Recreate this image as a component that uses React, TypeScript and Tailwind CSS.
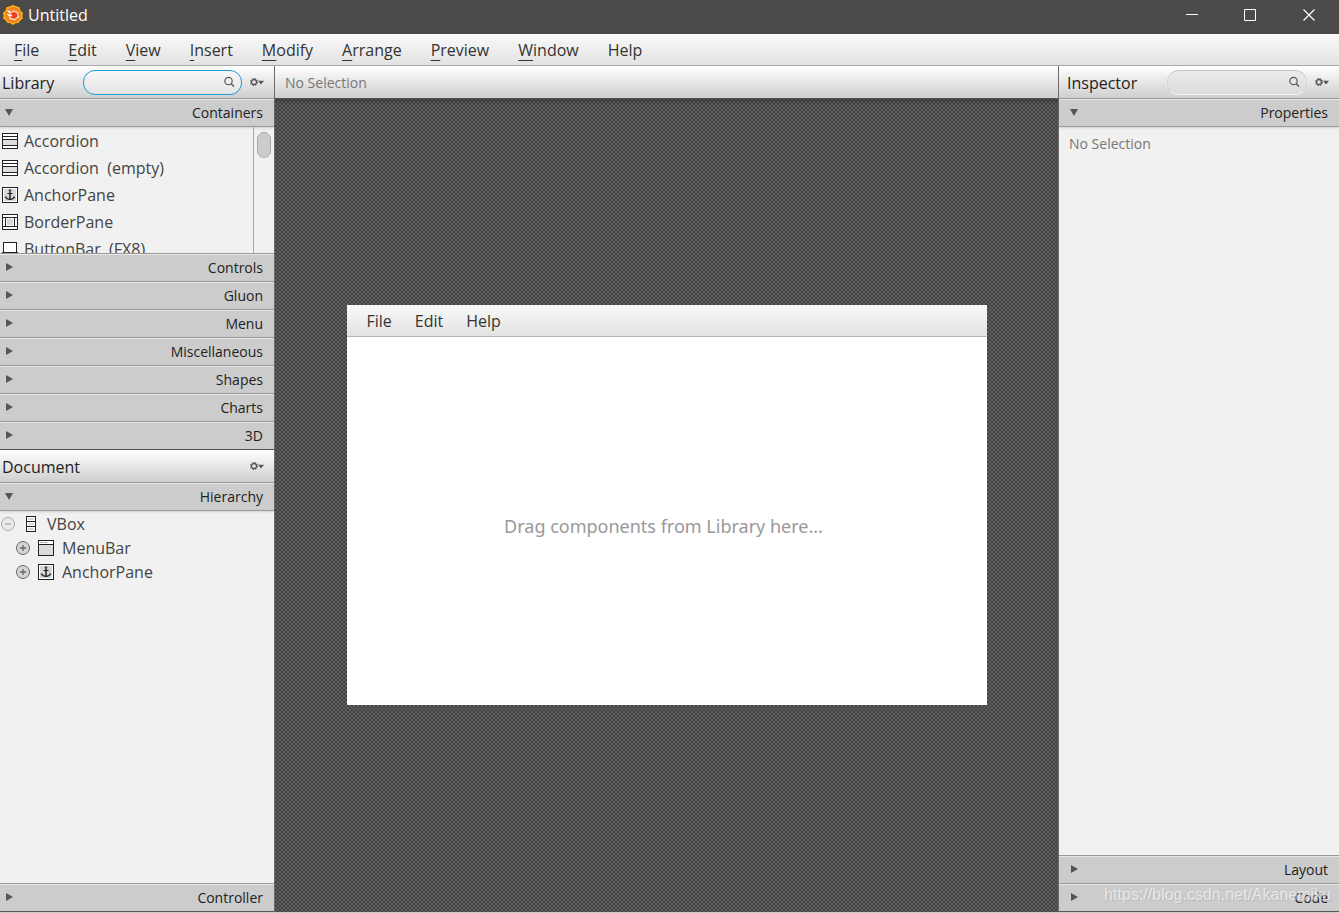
import React, { useState } from 'react';

const menus = ['File', 'Edit', 'View', 'Insert', 'Modify', 'Arrange', 'Preview', 'Window'];

const components = [
  { name: 'Accordion', icon: 'accordion' },
  { name: 'Accordion  (empty)', icon: 'accordion' },
  { name: 'AnchorPane', icon: 'anchor' },
  { name: 'BorderPane', icon: 'border' },
  { name: 'ButtonBar  (FX8)', icon: 'buttonbar' }
];

const librarySections = ['Controls', 'Gluon', 'Menu', 'Miscellaneous', 'Shapes', 'Charts', '3D'];

const Logo = () => (
  <svg width="20" height="20" viewBox="0 0 20 20" aria-hidden="true">
    <path d="M10 0l3.200 1.300 3.300.9 1 3.200L20 8l-.6 2.500.4 3-2.500 1.900L15.500 18l-3 .3L10 20l-2.500-1.700-3-.3-1.800-2.600L.2 13.500l.4-3L0 8l2.500-2.600 1-3.200 3.300-.9z" fill="#f9b21a" />
    <circle cx="10" cy="10" r="8" fill="#f58220" />
    <path d="M7 8l5-1 3 3-3.500 4-4-2z" fill="#ee4023" />
    <path d="M4.500 5.500l4 2L11 5.800l1.500 1.200 2.500.5-.2 2.500 1 2-2.300 1-1.500 1.800-2.500-.8-2.500-.2-.2-2.600-2.300-1.700 4.500 1.500z" fill="none" stroke="#fff" strokeWidth="1" strokeLinejoin="round" />
  </svg>
);

const SearchIcon = () => (
  <svg width="12" height="12" viewBox="0 0 12 12" fill="none" stroke="#5a5a5a" strokeWidth="1.200" aria-hidden="true">
    <circle cx="5.500" cy="5" r="3.700" />
    <path d="M8.200 7.700L11 10.500" strokeWidth="1.500" />
  </svg>
);

const GearIcon = () => (
  <svg width="14" height="8" viewBox="0 0 14 8" aria-hidden="true">
    <circle cx="4" cy="4" r="3.400" fill="none" stroke="#555" strokeWidth="1.200" strokeDasharray="1.335 1.335" />
    <circle cx="4" cy="4" r="2.500" fill="none" stroke="#555" strokeWidth="1.300" />
    <path d="M8 2.800H14L11 6.500z" fill="#555" />
  </svg>
);

const NodeIcon = ({ type }: { type: string }) => (
  <svg width="16" height="16" viewBox="0 0 16 16" className="shrink-0" shapeRendering="crispEdges" aria-hidden="true">
    {type === 'accordion' && (
      <>
        <rect x=".5" y=".5" width="15" height="15" fill="#fff" stroke="#222" />
        <rect x="1" y="7" width="14" height="5" fill="#dcdcdc" />
        <path d="M1 3.500h14M1 6.500h14M1 12.500h14" stroke="#222" />
      </>
    )}
    {type === 'anchor' && (
      <>
        <rect x=".5" y=".5" width="15" height="15" fill="#fff" stroke="#222" />
        <rect x="2" y="2" width="12" height="12" fill="#d8d8d8" />
        <g shapeRendering="auto" fill="none" stroke="#222">
          <circle cx="8" cy="3.500" r=".9" />
          <path d="M8 4.500v8" strokeWidth="1.500" />
          <path d="M5.500 6.500h5" />
          <path d="M3.700 10c.6 1.700 2.300 2.400 4.300 2.400s3.700-.7 4.300-2.400" strokeWidth="1.100" />
          <path d="M3 11l.6-1.500 1.400 1M13 11l-.6-1.500-1.400 1" strokeWidth=".6" />
        </g>
      </>
    )}
    {type === 'border' && (
      <>
        <rect x=".5" y=".5" width="15" height="15" fill="#fff" stroke="#222" />
        <path d="M1 3.500h14M1 12.500h14M3.500 4v8M12.500 4v8" stroke="#222" />
        <rect x="5" y="5" width="6" height="6" fill="#d8d8d8" />
      </>
    )}
    {type === 'buttonbar' && (
      <>
        <rect x="1.500" y="1.500" width="13" height="10" fill="#fff" stroke="#222" />
        <path d="M0 11.500h16" stroke="#222" />
      </>
    )}
    {type === 'vbox' && (
      <>
        <rect x="3.500" y=".5" width="9" height="15" fill="#fff" stroke="#222" />
        <path d="M4 5.500h8M4 10.500h8" stroke="#222" />
        <path d="M5 3h6M5 8h6M5 13h6" stroke="#d8d8d8" strokeWidth="2" />
      </>
    )}
    {type === 'menubar' && (
      <>
        <rect x=".5" y=".5" width="15" height="15" fill="#dcdcdc" stroke="#222" />
        <rect x="1" y="1" width="14" height="3" fill="#fff" />
        <path d="M1 4.500h14" stroke="#222" />
        <path d="M2 2.500h3M6 2.500h3" stroke="#aaa" />
      </>
    )}
  </svg>
);

const Disclosure = ({ open }: { open: boolean }) => (
  <button
    aria-label={open ? 'Collapse' : 'Expand'}
    className={`flex w-4 h-4 shrink-0 items-center justify-center ${open ? 'opacity-50' : ''}`}
  >
    <svg width="14" height="14" viewBox="0 0 14 14" fill="none" stroke="#666" aria-hidden="true">
      <circle cx="7" cy="7" r="6.500" fill={open ? '#e4e4e4' : '#d5d5d5'} />
      <path d={open ? 'M4 7h6' : 'M4 7h6M7 4v6'} strokeWidth="1.300" />
    </svg>
  </button>
);

const SectionHeader = ({ title, open = false, last = false }: { title: string; open?: boolean; last?: boolean }) => (
  <button
    aria-expanded={open}
    className={`flex h-7 w-full shrink-0 items-center justify-between border-t border-b border-t-[#e8e8e8] bg-[#cccccc] pr-[11px] pl-[5px] text-sm text-[#222] ${
      last ? 'border-b-[#555]' : 'border-b-[#999]'
    } ${open ? 'shadow-sm' : ''}`}
  >
    <svg width="8" height="8" viewBox="0 0 8 8" className="mb-0.5" fill="#555" aria-hidden="true">
      <path d={open ? 'M0 1h8L4 8z' : 'M1 0l7 4-7 4z'} />
    </svg>
    <span>{title}</span>
  </button>
);

const SearchField = ({ label, focused = false }: { label: string; focused?: boolean }) => {
  const [value, setValue] = useState('');
  return (
    <label
      className={`flex h-[25px] min-w-0 items-center rounded-xl border pr-1.5 pl-2 ${
        focused
          ? 'w-[159px] border-[#1a9dd4] bg-linear-to-b from-[#f8f8f8] to-[#e4e4e4]'
          : 'w-[140px] border-t-[#c4c4c4] border-x-[#d4d4d4] border-b-[#f4f4f4] bg-linear-to-b from-[#ebebeb] to-[#dcdcdc]'
      }`}
    >
      <input
        aria-label={label}
        value={value}
        onChange={(e) => setValue(e.target.value)}
        className="min-w-0 flex-1 bg-transparent text-sm outline-none"
      />
      <SearchIcon />
    </label>
  );
};

const PanelHeader = ({ title, children }: { title: string; children?: React.ReactNode }) => (
  <div className="flex h-[33px] shrink-0 items-center border-b border-[#999] bg-linear-to-b from-white to-[#cfcfcf] pr-2.5">
    <h2 className="flex-1 pt-0.5 text-base text-[#222]">{title}</h2>
    {children}
    <button aria-label={`${title} options`} className="ml-2">
      <GearIcon />
    </button>
  </div>
);

const TreeRow = ({ name, icon, open = false }: { name: string; icon: string; open?: boolean }) => (
  <li className={`flex h-6 items-center ${open ? '' : 'pl-[15px]'}`}>
    <Disclosure open={open} />
    <span className="mr-2 ml-[7px]">
      <NodeIcon type={icon} />
    </span>
    {name}
  </li>
);

const App = () => {
  return (
    <div className="flex h-screen flex-col overflow-hidden bg-[#f1f1f1] font-['Open_Sans',sans-serif] text-base text-[#333]">
      {/* Title bar */}
      <header className="flex h-[34px] shrink-0 items-center bg-[#4c4a48] pr-[23px] pb-1 pl-[3px] text-white">
        <Logo />
        <h1 className="ml-[5px] flex-1">Untitled</h1>
        <div className="flex gap-[46px]">
          <button aria-label="Minimize">
            <svg width="13" height="13" viewBox="0 0 13 13" stroke="#fff"><path d="M1 5.500h12" /></svg>
          </button>
          <button aria-label="Maximize">
            <svg width="13" height="13" viewBox="0 0 13 13" fill="none" stroke="#fff"><path d="M.5.5h11v11H.5z" /></svg>
          </button>
          <button aria-label="Close">
            <svg width="13" height="13" viewBox="0 0 13 13" stroke="#fff" strokeWidth="1.200"><path d="M.5.5l11 11M11.500.5l-11 11" /></svg>
          </button>
        </div>
      </header>

      {/* Menu bar */}
      <nav className="flex h-8 shrink-0 items-center gap-[29px] border-b border-[#aaa] bg-linear-to-b from-[#fafafa] to-[#e2e2e2] px-3.5">
        {menus.map((menu) => (
          <button key={menu}>
            <span className="underline decoration-1 underline-offset-4">{menu[0]}</span>
            {menu.slice(1)}
          </button>
        ))}
        <button>Help</button>
      </nav>

      <div className="flex min-h-0 flex-1 border-b border-[#ccc]">
        {/* Library and document */}
        <aside className="flex w-[275px] shrink-0 flex-col border-r border-[#6c6c6c]">
          <div className="[&_h2]:pl-0.5">
            <PanelHeader title="Library">
              <SearchField label="Search library" focused />
            </PanelHeader>
          </div>
          <SectionHeader title="Containers" open />
          <div className="flex h-[127px] shrink-0 overflow-hidden border-b border-[#999]">
            <ul className="flex-1">
              {components.map((item) => (
                <li key={item.name} className="flex h-[27px] items-center gap-1.5 pl-0.5 whitespace-pre text-[#444]">
                  <NodeIcon type={item.icon} />
                  {item.name}
                </li>
              ))}
            </ul>
            <div className="w-[21px] border-l border-[#aaa] px-[3px] pt-[5px]">
              <div className="h-[26px] w-3.5 rounded-full border border-[#aaa] bg-[#cccccc]" />
            </div>
          </div>
          {librarySections.map((title) => (
            <SectionHeader key={title} title={title} last={title === '3D'} />
          ))}

          <div className="[&_h2]:pl-0.5">
            <PanelHeader title="Document" />
          </div>
          <SectionHeader title="Hierarchy" open />
          <ul className="min-h-0 flex-1 border-b border-[#999] pt-px text-[#444]">
            <TreeRow name="VBox" icon="vbox" open />
            <TreeRow name="MenuBar" icon="menubar" />
            <TreeRow name="AnchorPane" icon="anchor" />
          </ul>
          <SectionHeader title="Controller" last />
        </aside>

        {/* Canvas */}
        <main className="flex min-w-0 flex-1 flex-col">
          <div className="flex h-[33px] shrink-0 items-center border-b border-[#555] bg-linear-to-b from-white to-[#cfcfcf] px-2.5 pt-0.5 text-sm text-[#777]">
            No Selection
          </div>
          <div className="flex min-h-0 flex-1 items-center justify-center bg-[repeating-conic-gradient(#424242_0_25%,#606060_0_50%)] bg-size-[4px_4px] pb-0.5 shadow-[inset_0_4px_4px_-3px_#333]">
            <div className="flex h-[400px] w-[640px] flex-col bg-white">
              <div className="flex h-8 shrink-0 items-center gap-[23px] border-b border-[#b5b5b5] bg-linear-to-b from-[#fafafa] to-[#e2e2e2] px-5 pt-0.5">
                <button>File</button>
                <button>Edit</button>
                <button>Help</button>
              </div>
              <p className="flex flex-1 items-center justify-center pt-2.5 pr-1.5 font-['Noto_Sans',sans-serif] text-lg text-[#999]">
                Drag components from Library here...
              </p>
            </div>
          </div>
        </main>

        {/* Inspector */}
        <aside className="relative flex w-[281px] shrink-0 flex-col border-l border-[#6c6c6c]">
          <div className="[&_h2]:pl-2">
            <PanelHeader title="Inspector">
              <SearchField label="Search inspector" />
            </PanelHeader>
          </div>
          <div className="[&_button]:pl-[11px]">
            <SectionHeader title="Properties" open />
          </div>
          <p className="flex-1 border-b border-[#999] px-2.5 pt-[7px] text-sm text-[#777]">No Selection</p>
          <div className="[&_button]:pl-[11px]">
            <SectionHeader title="Layout" />
            <SectionHeader title="Code" last />
          </div>
          <span className="pointer-events-none absolute right-2 bottom-[5px] font-['Liberation_Sans',sans-serif] text-base text-white/60 [text-shadow:1px_1px_0_#aaa8]">
            https://blog.csdn.net/Akanemiku
          </span>
        </aside>
      </div>
    </div>
  );
};

export default App;
